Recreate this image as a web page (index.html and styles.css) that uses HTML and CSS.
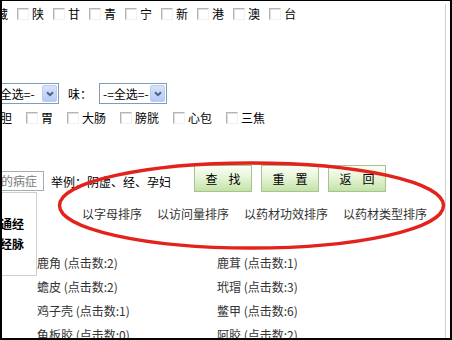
FILE: index.html
```html
<!DOCTYPE html>
<html lang="zh-CN">
<head>
  <meta charset="UTF-8">
  <meta name="viewport" content="width=device-width, initial-scale=1.0">
  <title>药材查询</title>
  <link rel="stylesheet" href="styles.css">
</head>
<body>
  <div class="page">
    <div class="content">
      <div class="row prov">
        <span class="lbl first">藏</span>
        <span class="cb"></span><span class="lbl">陕</span>
        <span class="cb"></span><span class="lbl">甘</span>
        <span class="cb"></span><span class="lbl">青</span>
        <span class="cb"></span><span class="lbl">宁</span>
        <span class="cb"></span><span class="lbl">新</span>
        <span class="cb"></span><span class="lbl">港</span>
        <span class="cb"></span><span class="lbl">澳</span>
        <span class="cb"></span><span class="lbl">台</span>
      </div>

      <div class="row sel-row">
        <div class="sel sel-first">
          <span class="sel-text">-=全选=-</span>
          <span class="sel-btn"><svg width="8" height="6" viewBox="0 0 8 6"><path d="M1 1.2 L4 4.2 L7 1.2" fill="none" stroke="#4d6185" stroke-width="2"/></svg></span>
        </div>
        <span class="sel-label">味：</span>
        <div class="sel">
          <span class="sel-text">-=全选=-</span>
          <span class="sel-btn"><svg width="8" height="6" viewBox="0 0 8 6"><path d="M1 1.2 L4 4.2 L7 1.2" fill="none" stroke="#4d6185" stroke-width="2"/></svg></span>
        </div>
      </div>

      <div class="row organ">
        <span class="lbl first">胆</span>
        <span class="cb"></span><span class="lbl">胃</span>
        <span class="cb"></span><span class="lbl">大肠</span>
        <span class="cb"></span><span class="lbl">膀胱</span>
        <span class="cb"></span><span class="lbl">心包</span>
        <span class="cb"></span><span class="lbl">三焦</span>
      </div>

      <div class="row search">
        <div class="kw"><span>的病症</span></div>
        <span class="hint">举例：阴虚、经、孕妇</span>
        <div class="btns">
          <button class="btn"><span>查</span><span>找</span></button>
          <button class="btn"><span>重</span><span>置</span></button>
          <button class="btn"><span>返</span><span>回</span></button>
        </div>
      </div>

      <div class="result">
        <div class="cat-box">
          <div>通经</div>
          <div>经脉</div>
        </div>
        <div class="main">
          <div class="sorts">
            <a href="#">以字母排序</a>
            <a href="#">以访问量排序</a>
            <a href="#">以药材功效排序</a>
            <a href="#">以药材类型排序</a>
          </div>
          <ul class="herbs">
            <li>鹿角 (点击数:2)</li>
            <li>鹿茸 (点击数:1)</li>
            <li>蟾皮 (点击数:2)</li>
            <li>玳瑁 (点击数:3)</li>
            <li>鸡子壳 (点击数:1)</li>
            <li>鳖甲 (点击数:6)</li>
            <li>龟板胶 (点击数:0)</li>
            <li>阿胶 (点击数:2)</li>
          </ul>
        </div>
      </div>
    </div>

    <!-- red marker circle drawn over the sort links -->
    <svg class="mark" width="452" height="340" viewBox="0 0 452 340">
      <ellipse cx="251.5" cy="205.5" rx="192" ry="42.5" fill="none" stroke="#e3231b" stroke-width="3.4"/>
    </svg>
  </div>
</body>
</html>
```

FILE: styles.css
```css
body {
  margin: 0;
  padding: 0;
  font-family: "SimSun", "Noto Sans CJK SC", sans-serif;
  font-size: 12px;
  color: #000;
  background: #fff;
}
.page {
  position: relative;
  width: 452px;
  height: 340px;
  overflow: hidden;
}
.page::after {
  content: "";
  position: absolute;
  top: 0;
  left: 0;
  right: 0;
  bottom: 0;
  border: solid #000;
  border-width: 1px 2px 2px 2px;
  pointer-events: none;
}
.content {
  width: 445px;
  height: 340px;
  border-right: 1px solid #d0d0d0;
}
.row {
  display: flex;
  align-items: center;
  white-space: nowrap;
}
.lbl {
  margin-left: 3px;
  line-height: 20px;
}
.cb {
  width: 12px;
  height: 12px;
  box-sizing: border-box;
  border: 1px solid;
  border-color: #b4b4b4 #f0f0f0 #f0f0f0 #b4b4b4;
  box-shadow: inset 1px 1px 0 #dedede;
  background: #fff;
}
.prov {
  margin-top: 4px;
  height: 20px;
}
.prov .lbl.first {
  margin-left: -4px;
}
.prov .cb {
  margin-left: 9px;
}

/* selects */
.sel-row {
  margin-top: 59px;
  height: 21px;
}
.sel {
  display: flex;
  align-items: center;
  width: 68px;
  height: 21px;
  box-sizing: border-box;
  border: 1px solid #7f9db9;
  background: #fff;
}
.sel-first {
  width: 74px;
  margin-left: -15px;
}
.sel-text {
  flex: 1;
  padding-left: 3px;
}
.sel-btn {
  display: flex;
  align-items: center;
  justify-content: center;
  width: 15px;
  height: 17px;
  margin-right: 1px;
  box-sizing: border-box;
  border: 1px solid #b9cbf1;
  border-radius: 2px;
  background: linear-gradient(#d7e3fb, #b5cbf5);
}
.sel-label {
  margin-left: 9px;
  margin-right: 7px;
}

.organ {
  margin-top: 4px;
  height: 20px;
}
.organ .lbl.first {
  margin-left: 0;
}
.organ .cb {
  margin-left: 14px;
}

/* search line */
.search {
  margin-top: 37px;
  align-items: flex-start;
  height: 27px;
}
.kw {
  margin-top: 6px;
  margin-left: -2px;
  width: 46px;
  height: 20px;
  box-sizing: border-box;
  border: 1px solid #a5acb2;
  padding-left: 2px;
  line-height: 18px;
  color: #7a7a7a;
  overflow: hidden;
}
.hint {
  margin-left: 7px;
  margin-top: 10px;
  line-height: 14px;
}
.btns {
  display: flex;
  gap: 9px;
  margin-left: 23px;
}
.btn {
  display: flex;
  align-items: center;
  justify-content: center;
  gap: 11px;
  width: 58px;
  height: 27px;
  padding: 0 0 1px;
  border: 1px solid #a7c293;
  background: linear-gradient(#fbfef6, #e6f5d8 45%, #c3e2a6);
  font-family: inherit;
  font-size: 12px;
  color: #000;
}

/* results */
.result {
  display: flex;
  align-items: flex-start;
}
.cat-box {
  margin-left: -1px;
  width: 38px;
  height: 84px;
  box-sizing: border-box;
  border: 1px solid #cfcfcf;
  padding: 21px 13px 0 0;
  text-align: right;
  line-height: 20px;
  font-weight: bold;
  white-space: nowrap;
}
.main {
  flex: 1;
}
.sorts {
  display: flex;
  gap: 15px;
  margin-left: 45px;
  padding-top: 15px;
  line-height: 14px;
}
.sorts a {
  color: #333;
  text-decoration: none;
}
.herbs {
  display: grid;
  grid-template-columns: 180px 180px;
  margin: 30px 0 0;
  padding: 0;
  list-style: none;
  line-height: 24px;
  color: #333;
}
.mark {
  position: absolute;
  top: 0;
  left: 0;
  pointer-events: none;
}
```
